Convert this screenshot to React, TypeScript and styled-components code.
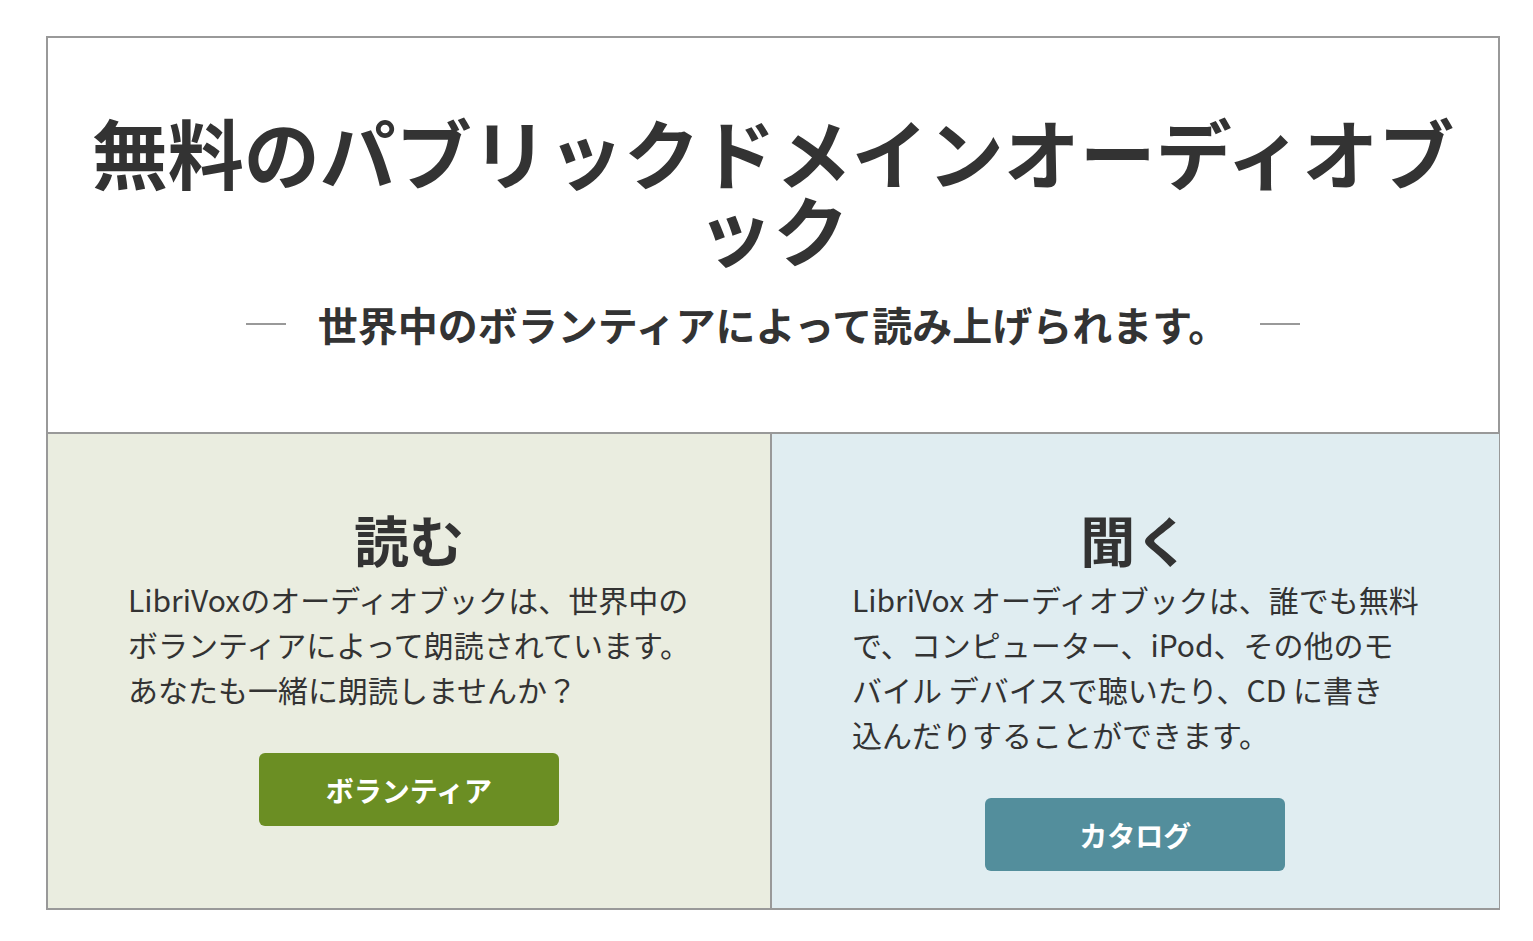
import styled, { createGlobalStyle } from "styled-components";

const GlobalStyle = createGlobalStyle`
  body {
    margin: 0;
    background: #fff;
    font-family: "Noto Sans CJK JP", "Liberation Sans", sans-serif;
    color: #333;
  }
`;

const Page = styled.div`
  padding: 36px 33px 0 46px;
`;

const Frame = styled.section`
  border: 2px solid #999;
`;

const Hero = styled.header`
  padding: 75px 30px 85px;
  border-bottom: 2px solid #999;
  text-align: center;
`;

const Title = styled.h1`
  margin: 0;
  font-size: 76px;
  line-height: 77px;
  font-weight: 700;
  color: #333;
`;

const Tagline = styled.div`
  margin-top: 34px;
  display: flex;
  align-items: center;
  justify-content: center;
  gap: 32px;
`;

const Dash = styled.span`
  width: 40px;
  height: 2px;
  background: #999;
`;

const TaglineText = styled.h2`
  margin: 0;
  font-size: 40px;
  line-height: 46px;
  font-weight: 700;
  color: #333;
`;

const Columns = styled.div`
  display: grid;
  grid-template-columns: 1fr 1fr;
`;

const Column = styled.div<{ $bg: string; $divider?: boolean }>`
  background: ${(p) => p.$bg};
  border-right: ${(p) => (p.$divider ? "2px solid #999" : "none")};
  padding: 71px 80px 37px;
  display: flex;
  flex-direction: column;
  align-items: center;
`;

const Heading = styled.h3`
  margin: 0;
  font-size: 55px;
  line-height: 66px;
  font-weight: 700;
  color: #333;
`;

const Text = styled.p`
  margin: 6px 0 0;
  align-self: stretch;
  font-size: 30px;
  line-height: 45px;
  font-weight: 400;
  white-space: nowrap;
  color: #333;
`;

const Button = styled.a<{ $color: string }>`
  margin-top: 41px;
  width: 300px;
  height: 73px;
  border-radius: 6px;
  background: ${(p) => p.$color};
  color: #fff;
  display: flex;
  align-items: center;
  justify-content: center;
  font-size: 28px;
  font-weight: 700;
  text-decoration: none;
`;

const App = () => {
  return (
    <Page>
      <GlobalStyle />
      <Frame>
        <Hero>
          <Title>無料のパブリックドメインオーディオブック</Title>
          <Tagline>
            <Dash />
            <TaglineText>世界中のボランティアによって読み上げられます。</TaglineText>
            <Dash />
          </Tagline>
        </Hero>
        <Columns>
          <Column $bg="#eaede0" $divider>
            <Heading>読む</Heading>
            <Text>
              LibriVoxのオーディオブックは、世界中の
              <br />
              ボランティアによって朗読されています。
              <br />
              あなたも一緒に朗読しませんか？
            </Text>
            <Button $color="#6b8e23" href="#">
              ボランティア
            </Button>
          </Column>
          <Column $bg="#e0edf1">
            <Heading>聞く</Heading>
            <Text>
              LibriVox オーディオブックは、誰でも無料
              <br />
              で、コンピューター、iPod、その他のモ
              <br />
              バイル デバイスで聴いたり、CD に書き
              <br />
              込んだりすることができます。
            </Text>
            <Button $color="#538e9c" href="#">
              カタログ
            </Button>
          </Column>
        </Columns>
      </Frame>
    </Page>
  );
};

export default App;
